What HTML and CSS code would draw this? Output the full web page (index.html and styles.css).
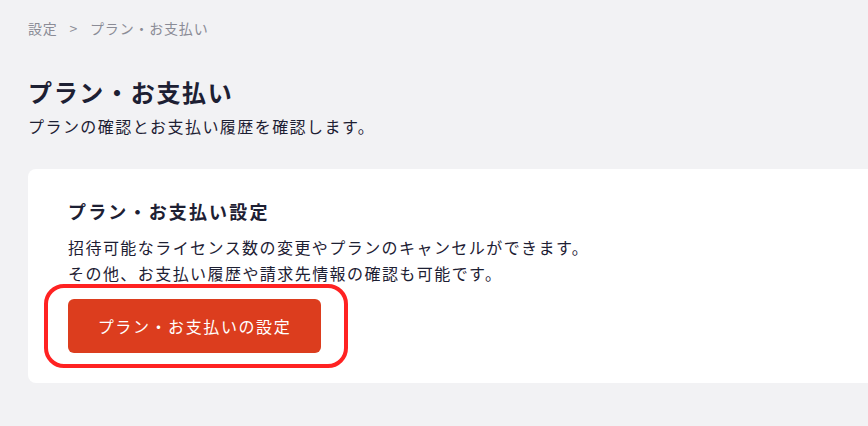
FILE: index.html
```html
<!DOCTYPE html>
<html lang="ja">
<head>
    <meta charset="UTF-8">
    <meta name="viewport" content="width=device-width, initial-scale=1.0">
    <title>プラン・お支払い</title>
    <link rel="stylesheet" href="styles.css">
</head>
<body>
    <div id="page">
        <div class="breadcrumb">
            <span>設定</span>
            <span class="breadcrumb-sep">&gt;</span>
            <span>プラン・お支払い</span>
        </div>
        <h1 class="page-title">プラン・お支払い</h1>
        <p class="page-desc">プランの確認とお支払い履歴を確認します。</p>

        <div class="card">
            <h2 class="card-title">プラン・お支払い設定</h2>
            <p class="card-text">招待可能なライセンス数の変更やプランのキャンセルができます。<br>その他、お支払い履歴や請求先情報の確認も可能です。</p>
            <div class="btn-wrap">
                <button class="btn-primary">プラン・お支払いの設定</button>
            </div>
        </div>
    </div>
</body>
</html>
```

FILE: styles.css
```css
:root {
    --bg-color: #f2f2f4;
    --text-color: #1d2033;
    --muted-color: #8b8c96;
    --primary-color: #dc3d1e;
    --mark-color: #ff2222;
}
*{
    box-sizing: border-box;
}
body{
    margin: 0;
    background-color: var(--bg-color);
    color: var(--text-color);
    font-family: "Noto Sans CJK JP", "Noto Sans", sans-serif;
    letter-spacing: 0.05em;
    overflow: hidden;
}
#page{
    padding: 18px 0 0 28px;
}
.breadcrumb{
    font-size: 14px;
    line-height: 20px;
    color: var(--muted-color);
}
.breadcrumb-sep{
    margin: 0 8px;
}
.page-title{
    margin: 37px 0 4px;
    font-size: 24px;
    line-height: 34px;
    font-weight: 700;
    letter-spacing: 0.07em;
}
.page-desc{
    margin: 0;
    font-size: 16px;
    line-height: 26px;
    letter-spacing: 0.09em;
}
.card{
    width: 840px;
    margin-top: 30px;
    padding: 29px 40px 30px;
    background-color: #fff;
    border-radius: 8px 0 0 8px;
}
.card-title{
    margin: 0 0 10px;
    font-size: 18px;
    line-height: 26px;
    font-weight: 700;
    letter-spacing: 0.12em;
}
.card-text{
    margin: 0;
    font-size: 16px;
    line-height: 26px;
    letter-spacing: 0.09em;
}
.btn-wrap{
    position: relative;
    display: inline-block;
    margin-top: 13px;
}
/* 注目枠 */
.btn-wrap:after{
    content: '';
    position: absolute;
    top: -15px;
    left: -24px;
    right: -27px;
    bottom: -15px;
    border: 4px solid var(--mark-color);
    border-radius: 20px;
}
.btn-primary{
    display: block;
    width: 253px;
    height: 54px;
    border: none;
    border-radius: 6px;
    background-color: var(--primary-color);
    color: #fff;
    font-family: inherit;
    font-size: 16px;
    letter-spacing: 0.1em;
    cursor: pointer;
}
```
